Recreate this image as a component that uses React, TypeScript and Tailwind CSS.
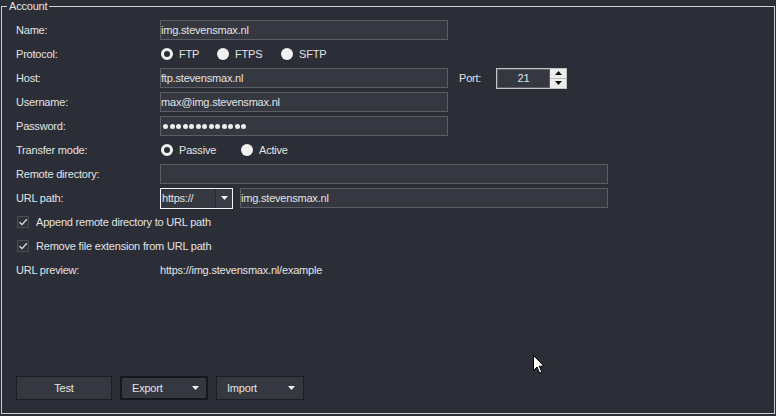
import React from 'react'

const Field = ({ value, className = '' }: { value?: string; className?: string }) => (
  <div
    className={`h-5 border border-[#5b5e65] bg-[#353841] leading-[18px] whitespace-nowrap overflow-hidden ${className}`}
  >
    {value}
  </div>
)

const Radio = ({ label, checked, className = '' }: { label: string; checked?: boolean; className?: string }) => (
  <div className={`flex items-center gap-[6px] ${className}`}>
    {checked ? (
      <span className="w-[12px] h-[12px] rounded-full border-[3px] border-[#f2f2f2] bg-[#2b2e37]" />
    ) : (
      <span className="w-[12px] h-[12px] rounded-full bg-[#f2f2f2]" />
    )}
    <span>{label}</span>
  </div>
)

const Check = ({ label }: { label: string }) => (
  <div className="col-span-2 flex items-center gap-[7px] pl-[1px]">
    <span className="w-[12px] h-[12px] border border-[#4a4d55] bg-[#2f323b] flex items-center justify-center">
      <svg width="10" height="10" viewBox="0 0 10 10">
        <path d="M1.5 5.2 L4 7.6 L8.8 2.2" fill="none" stroke="#d8d8d8" strokeWidth="1.4" />
      </svg>
    </span>
    <span>{label}</span>
  </div>
)

const Caret = ({ color = '#f0f0f0' }: { color?: string }) => (
  <svg width="7" height="4" viewBox="0 0 7 4">
    <path d="M0 0 H7 L3.5 4 Z" fill={color} />
  </svg>
)

export default function App() {
  return (
    <div className="relative w-[776px] h-[416px] bg-[#2b2e37] text-[#e3e3e3] text-[11px] tracking-[-0.2px] font-['Liberation_Sans',Arial,sans-serif] overflow-hidden">
      <fieldset className="ml-[1px] w-[774px] h-[414px] border border-[#d0d0d0]">
        <legend className="ml-[5px] px-[2px] leading-[13px]">Account</legend>
        <div className="flex flex-col h-[400px] pt-[5px] pl-[14px] pb-[13px]">
          <div className="grid grid-cols-[144px_1fr] auto-rows-[24px] items-center">
            <span>Name:</span>
            <Field value="img.stevensmax.nl" className="w-[288px]" />

            <span>Protocol:</span>
            <div className="flex items-center pl-[1px]">
              <Radio label="FTP" checked className="w-[56px]" />
              <Radio label="FTPS" className="w-[64px]" />
              <Radio label="SFTP" />
            </div>

            <span>Host:</span>
            <div className="flex items-center">
              <Field value="ftp.stevensmax.nl" className="w-[288px]" />
              <span className="ml-[11px] w-[37px]">Port:</span>
              <div className="flex w-[71px] h-[21px] border border-[#c4c4c4]">
                <div className="flex-1 border border-[#5b5e65] bg-[#353841] text-center leading-[17px]">21</div>
                <div className="w-[16px] flex flex-col bg-[#ececec]">
                  <div className="flex-1 flex items-center justify-center border-b border-[#bdbdbd]">
                    <svg width="7" height="4" viewBox="0 0 7 4">
                      <path d="M0 4 H7 L3.5 0 Z" fill="#111" />
                    </svg>
                  </div>
                  <div className="flex-1 flex items-center justify-center">
                    <Caret color="#111" />
                  </div>
                </div>
              </div>
            </div>

            <span>Username:</span>
            <Field value="max@img.stevensmax.nl" className="w-[288px]" />

            <span>Password:</span>
            <div className="h-5 w-[288px] border border-[#5b5e65] bg-[#353841] flex items-center gap-[1.5px] pl-[2px]">
              {Array.from({ length: 13 }).map((_, i) => (
                <span key={i} className="w-[5px] h-[5px] rounded-full bg-[#eeeeee]" />
              ))}
            </div>

            <span>Transfer mode:</span>
            <div className="flex items-center pl-[1px]">
              <Radio label="Passive" checked className="w-[80px]" />
              <Radio label="Active" />
            </div>

            <span>Remote directory:</span>
            <Field className="w-[448px]" />

            <span>URL path:</span>
            <div className="flex items-center">
              <div className="flex w-[73px] h-[21px] border border-[#f4f4f4] bg-[#353841]">
                <span className="flex-1 leading-[19px] pl-[1px]">https://</span>
                <span className="w-[17px] border-l border-[#26282e] bg-[#3a3d45] flex items-center justify-center">
                  <Caret />
                </span>
              </div>
              <Field value="img.stevensmax.nl" className="ml-[7px] w-[368px]" />
            </div>

            <Check label="Append remote directory to URL path" />
            <Check label="Remove file extension from URL path" />

            <span>URL preview:</span>
            <span>https://img.stevensmax.nl/example</span>
          </div>

          <div className="flex-1" />

          <div className="flex items-center gap-2">
            <button className="w-[96px] h-6 border border-[#1d1f24] bg-[#353841] text-center">Test</button>
            <button className="w-[88px] h-6 border-2 border-[#17181c] bg-[#353841] flex items-center justify-between pl-[10px] pr-[7px]">
              <span>Export</span>
              <Caret />
            </button>
            <button className="w-[88px] h-6 border border-[#1d1f24] bg-[#353841] flex items-center justify-between pl-[10px] pr-[8px]">
              <span>Import</span>
              <Caret />
            </button>
          </div>
        </div>
      </fieldset>

      {/* mouse cursor */}
      <svg className="absolute left-[533px] top-[355px]" width="13" height="19" viewBox="0 0 13 19">
        <path d="M0.5 0.5 V15.5 L4 12 L6.5 18 L8.8 17 L6.3 11.2 H11 Z" fill="#ffffff" stroke="#000000" strokeWidth="1" />
      </svg>
    </div>
  )
}
